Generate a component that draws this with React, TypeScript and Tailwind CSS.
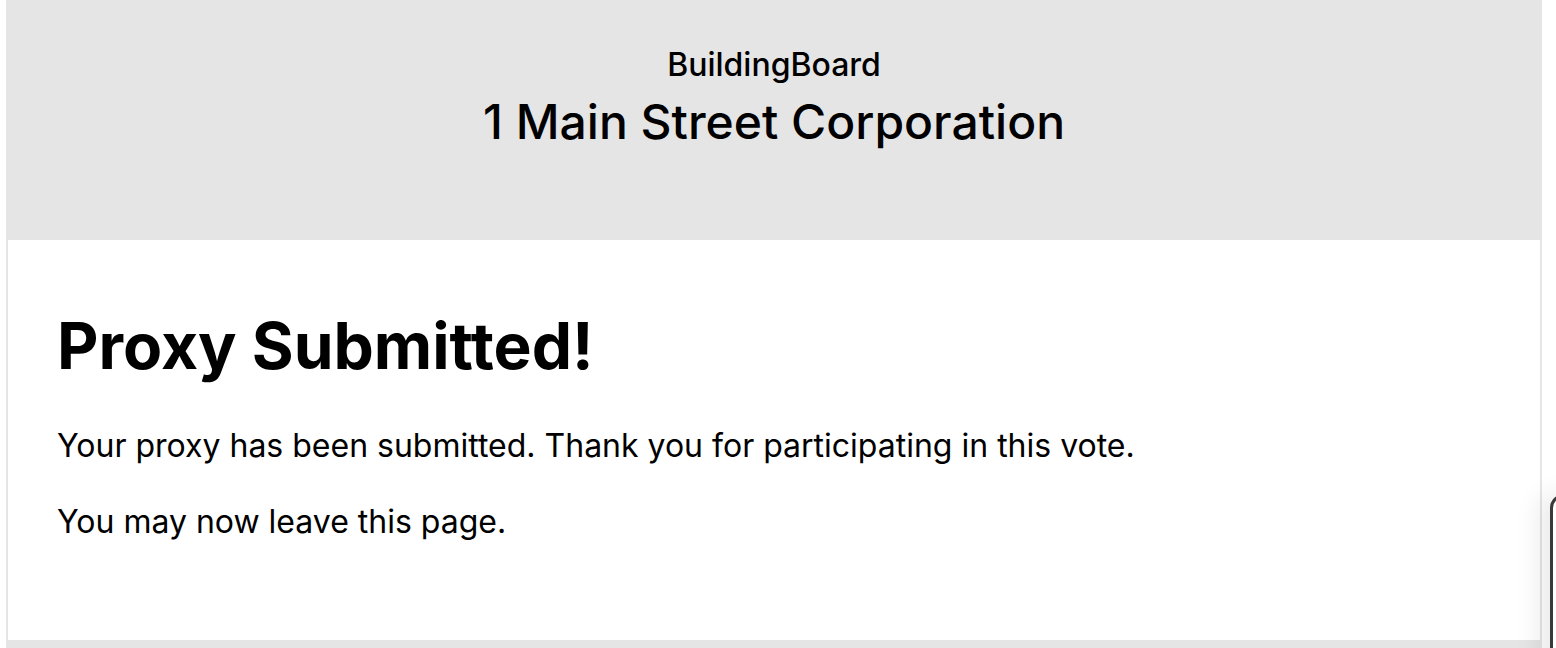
import React from "react";

const font = { fontFamily: "Inter, 'Noto Sans', sans-serif" };

export default function App() {
  return (
    <div className="relative w-[1556px] h-[648px] overflow-hidden bg-white" style={font}>
      <div className="ml-[6px] w-[1536px] h-full bg-[#e5e5e5] flex flex-col">
        {/* Header */}
        <header className="h-[240px] flex flex-col items-center pt-[44px] text-black">
          <div className="text-[32px] font-medium leading-[42px]">BuildingBoard</div>
          <div className="text-[48px] font-medium leading-[60px] mt-[6px]">1 Main Street Corporation</div>
        </header>

        {/* Card */}
        <main className="h-[400px] mx-[2px] bg-white px-[49px] pt-[66px] text-black">
          <h1 className="text-[64px] font-bold leading-[80px]">Proxy Submitted!</h1>
          <p className="text-[32px] leading-[40px] mt-[40px]">
            Your proxy has been submitted. Thank you for participating in this vote.
          </p>
          <p className="text-[32px] leading-[40px] mt-[36px]">You may now leave this page.</p>
        </main>
      </div>

      {/* floating panel edge */}
      <div className="absolute left-[1550px] top-[494px] w-[60px] h-[200px] rounded-tl-[14px] border-l-[3px] border-t-[3px] border-[#3a3a3a] bg-white shadow-[-12px_0_24px_rgba(0,0,0,0.08)]" />
    </div>
  );
}
